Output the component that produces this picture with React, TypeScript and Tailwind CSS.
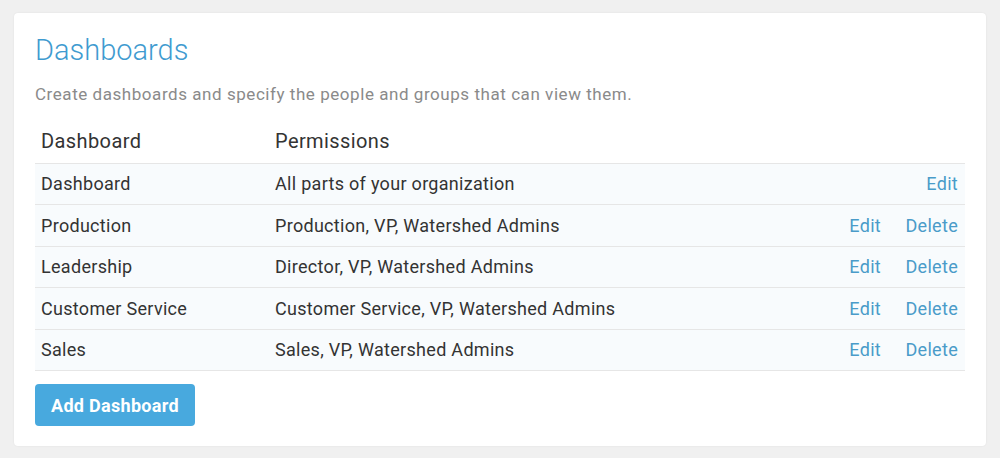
const rows = [
  { name: 'Dashboard', perms: 'All parts of your organization', del: false },
  { name: 'Production', perms: 'Production, VP, Watershed Admins', del: true },
  { name: 'Leadership', perms: 'Director, VP, Watershed Admins', del: true },
  { name: 'Customer Service', perms: 'Customer Service, VP, Watershed Admins', del: true },
  { name: 'Sales', perms: 'Sales, VP, Watershed Admins', del: true },
]

export default function App() {
  return (
    <div className="min-h-[458px] bg-[#f0f0f0] px-[14px] pt-[13px] pb-[12px] font-['Roboto',sans-serif]">
      <div className="rounded-[4px] bg-white shadow-[0_0_2px_rgba(0,0,0,0.08)] px-[21px] pt-[20px] pb-[20px]">
        {/* Header */}
        <h1 className="text-[29px] leading-[34px] font-light text-[#3f9bd0]">Dashboards</h1>
        <p className="mt-[17px] text-[17px] leading-[20px] tracking-[0.55px] text-[#8a8a8a]">
          Create dashboards and specify the people and groups that can view them.
        </p>

        {/* Table */}
        <table className="mt-[15px] w-full table-fixed border-collapse">
          <thead>
            <tr className="border-b border-[#e6e6e6]">
              <th className="w-[240px] h-[44px] px-[6px] text-left text-[20px] tracking-[0.4px] font-normal text-[#333]">Dashboard</th>
              <th className="px-0 text-left text-[20px] tracking-[0.4px] font-normal text-[#333]">Permissions</th>
              <th className="w-[70px]" />
              <th className="w-[81px]" />
            </tr>
          </thead>
          <tbody>
            {rows.map((r) => (
              <tr key={r.name} className="border-b border-[#e6e6e6] bg-[#f8fbfd] text-[18px] tracking-[0.3px]">
                <td className="h-[41.5px] px-[6px] text-[#333]">{r.name}</td>
                <td className="text-[#333]">{r.perms}</td>
                <td className="pr-[3px] text-right text-[#4a9bc9]">{r.del ? 'Edit' : ''}</td>
                <td className="pr-[7px] text-right text-[#4a9bc9]">{r.del ? 'Delete' : 'Edit'}</td>
              </tr>
            ))}
          </tbody>
        </table>

        <button className="mt-[13px] h-[42px] px-[16px] rounded-[4px] bg-[#48a9de] text-white text-[18px] tracking-[0.3px] font-bold">
          Add Dashboard
        </button>
      </div>
    </div>
  )
}
